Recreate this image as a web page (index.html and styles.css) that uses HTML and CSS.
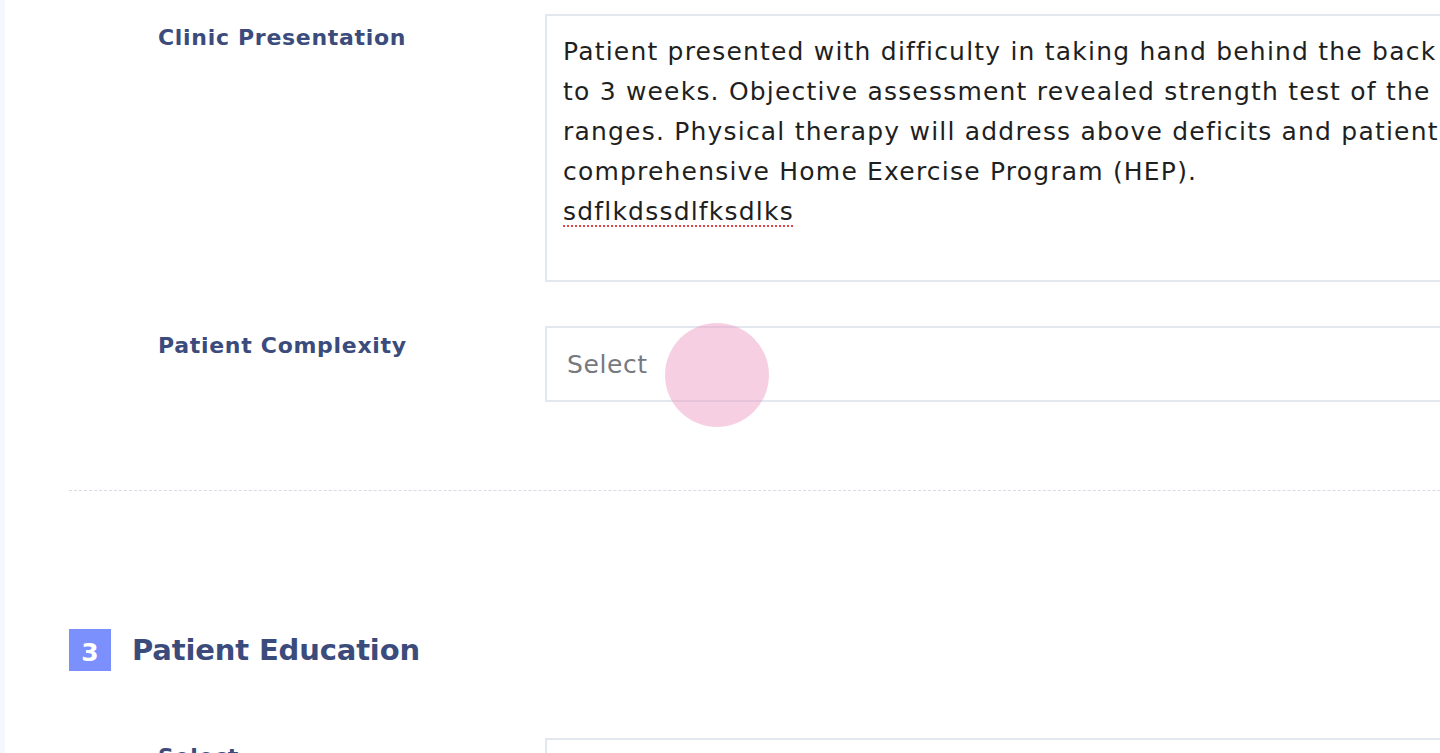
FILE: index.html
```html
<!DOCTYPE html>
<html lang="en">
<head>
<meta charset="utf-8">
<title>Assessment</title>
<link rel="stylesheet" href="styles.css">
</head>
<body>
<div class="rail"></div>
<main class="page">
  <section class="group">
    <div class="row">
      <div class="label">Clinic Presentation</div>
      <div class="field textarea">Patient presented with difficulty in taking hand behind the back for past 2<br>to 3 weeks. Objective assessment revealed strength test of the shoulder within normal<br>ranges. Physical therapy will address above deficits and patient will be given a<br>comprehensive Home Exercise Program (HEP).<br><span class="typo">sdflkdssdlfksdlks</span></div>
    </div>
    <div class="row row-select">
      <div class="label">Patient Complexity</div>
      <div class="field select"><span class="placeholder">Select</span></div>
    </div>
  </section>
  <hr class="divider">
  <section class="group">
    <h2 class="heading"><span class="badge">3</span>Patient Education</h2>
    <div class="row row-edu">
      <div class="label">Select</div>
      <div class="field select"></div>
    </div>
  </section>
</main>
<div class="cursor"></div>
</body>
</html>
```
FILE: styles.css
```css
html, body {
  margin: 0;
  padding: 0;
  height: 100%;
  overflow: hidden;
  background: #ffffff;
}
body {
  position: relative;
  font-family: "DejaVu Sans", "Open Sans", sans-serif;
  display: flex;
}
.rail {
  width: 5px;
  flex: none;
  background: #f4f7fd;
}
.page {
  flex: none;
  width: 1800px;
  padding: 14px 0 0 64px;
  box-sizing: border-box;
}
.row {
  display: flex;
  align-items: flex-start;
}
.label {
  width: 476px;
  flex: none;
  padding-left: 89px;
  box-sizing: border-box;
  font-size: 22px;
  font-weight: 700;
  color: #3b4c7c;
  line-height: 30px;
  padding-top: 9px;
  white-space: nowrap;
  letter-spacing: 0.7px;
}
.field {
  flex: 1;
  border: 2px solid #e3e7ee;
  box-sizing: border-box;
  background: #fff;
}
.textarea {
  height: 268px;
  padding: 16px 16px;
  font-size: 25px;
  line-height: 40px;
  letter-spacing: 1.2px;
  color: #1f1f1f;
  white-space: nowrap;
}
.typo {
  text-decoration: underline dotted #e04848;
  text-decoration-thickness: 2px;
  text-underline-offset: 5px;
}
.row-select {
  margin-top: 44px;
}
.row-select .label {
  padding-top: 5px;
}
.select {
  height: 76px;
  display: flex;
  align-items: center;
  padding-left: 20px;
  font-size: 25px;
  letter-spacing: 0.6px;
  color: #767a80;
}
.divider {
  margin: 88px 0 0 0;
  border: none;
  border-top: 1px dashed #d7dbe6;
  height: 0;
}
.heading {
  margin: 138px 0 0 0;
  display: flex;
  align-items: center;
  font-size: 29px;
  font-weight: 700;
  color: #3b4c7c;
  line-height: 42px;
  letter-spacing: -0.15px;
}
.badge {
  width: 42px;
  height: 42px;
  background: #7b8ffd;
  color: #fff;
  font-size: 25px;
  font-weight: 700;
  display: flex;
  align-items: center;
  justify-content: center;
  margin-right: 21px;
  padding-top: 6px;
  box-sizing: border-box;
  letter-spacing: 0;
}
.row-edu {
  margin-top: 67px;
}
.row-edu .label {
  padding-top: 4px;
}
.cursor {
  position: absolute;
  left: 665px;
  top: 323px;
  width: 104px;
  height: 104px;
  border-radius: 50%;
  background: rgba(236, 150, 190, 0.45);
}
```
